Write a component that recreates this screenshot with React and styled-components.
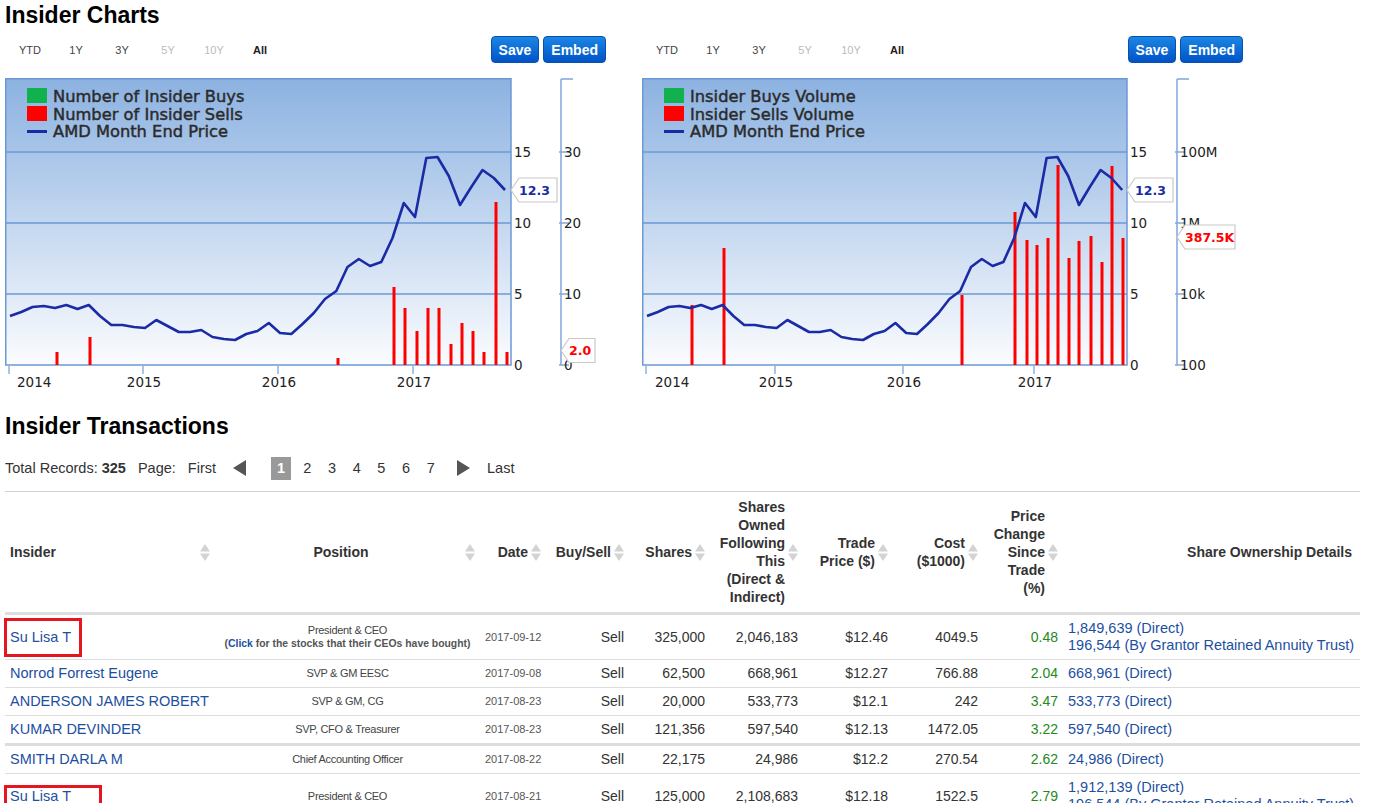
import React from 'react';
import styled, { createGlobalStyle } from 'styled-components';

const GlobalStyle = createGlobalStyle`
  html, body {
    margin: 0;
    padding: 0;
    background: #fff;
    overflow: hidden;
  }
  body {
    font-family: "Liberation Sans", Arial, sans-serif;
    color: #333;
  }
`;

// month end price, in chart pixels (Jan 2014 .. Sep 2017)
const PRICE = [241,237,232,231,233,230,234,230,241,250,250,252,253,245,251,257,257,255,262,264,265,259,256,248,258,259,249,238,224,216,192,184,191,187,163,128,142,83,82,101,130,112,95,103,115];

const GRID = [
  { y: 77, label: '15' },
  { y: 148, label: '10' },
  { y: 219, label: '5' },
  { y: 290, label: '0' },
];

const charts = [
  {
    id: 'count',
    plotW: 506,
    step: 11.25,
    legend: ['Number of Insider Buys', 'Number of Insider Sells', 'AMD Month End Price'],
    axis2: ['30', '20', '10', '0'],
    years: [
      { x: 4, lx: 12, label: '2014', start: true },
      { x: 138, label: '2015' },
      { x: 273, label: '2016' },
      { x: 408, label: '2017' },
    ],
    bars: [[52,277],[85,262],[333,283],[389,212],[400,233],[412,256],[423,233],[434,233],[446,269],[457,248],[468,256],[479,277],[491,127],[502,277]],
    tag2: { text: '2.0', cy: 275.5, w: 34 },
  },
  {
    id: 'volume',
    plotW: 485,
    step: 10.8,
    legend: ['Insider Buys Volume', 'Insider Sells Volume', 'AMD Month End Price'],
    axis2: ['100M', '1M', '10k', '100'],
    years: [
      { x: 4, lx: 13, label: '2014', start: true },
      { x: 133, label: '2015' },
      { x: 261, label: '2016' },
      { x: 392, label: '2017' },
    ],
    bars: [[50,230],[82,173],[320,220],[373,137],[385,165],[395,170],[406,163],[416,90],[427,183],[437,166],[449,161],[460,187],[470,91],[481,163]],
    tag2: { text: '387.5K', cy: 162, w: 58 },
  },
];

const ranges = [
  { label: 'YTD' },
  { label: '1Y' },
  { label: '3Y' },
  { label: '5Y', off: true },
  { label: '10Y', off: true },
  { label: 'All', active: true },
];

const columns = [
  { label: 'Insider', w: 210, align: 'left' },
  { label: 'Position', w: 265, align: 'center' },
  { label: 'Date', w: 66, align: 'right' },
  { label: 'Buy/Sell', w: 83, align: 'right' },
  { label: 'Shares', w: 81, align: 'right' },
  { label: 'Shares Owned Following This (Direct & Indirect)', w: 93, align: 'right' },
  { label: 'Trade Price ($)', w: 90, align: 'right' },
  { label: 'Cost ($1000)', w: 90, align: 'right' },
  { label: 'Price Change Since Trade (%)', w: 80, align: 'right' },
  { label: 'Share Ownership Details', w: 297, align: 'right', nosort: true },
];

const GRAT = '196,544 (By Grantor Retained Annuity Trust)';

const rows = [
  { name: 'Su Lisa T', flag: { right: 8, top: 8 }, pos: 'President & CEO', click: true, date: '2017-09-12', shares: '325,000', owned: '2,046,183', price: '$12.46', cost: '4049.5', change: '0.48', details: ['1,849,639 (Direct)', GRAT] },
  { name: 'Norrod Forrest Eugene', pos: 'SVP & GM EESC', date: '2017-09-08', shares: '62,500', owned: '668,961', price: '$12.27', cost: '766.88', change: '2.04', details: ['668,961 (Direct)'] },
  { name: 'ANDERSON JAMES ROBERT', pos: 'SVP & GM, CG', date: '2017-08-23', shares: '20,000', owned: '533,773', price: '$12.1', cost: '242', change: '3.47', details: ['533,773 (Direct)'] },
  { name: 'KUMAR DEVINDER', pos: 'SVP, CFO & Treasurer', date: '2017-08-23', shares: '121,356', owned: '597,540', price: '$12.13', cost: '1472.05', change: '3.22', details: ['597,540 (Direct)'] },
  { name: 'SMITH DARLA M', pos: 'Chief Accounting Officer', date: '2017-08-22', shares: '22,175', owned: '24,986', price: '$12.2', cost: '270.54', change: '2.62', details: ['24,986 (Direct)'], thick: true },
  { name: 'Su Lisa T', flag: { right: 28, top: 0 }, pos: 'President & CEO', date: '2017-08-21', shares: '125,000', owned: '2,108,683', price: '$12.18', cost: '1522.5', change: '2.79', details: ['1,912,139 (Direct)', GRAT] },
];

const Page = styled.div`
  width: 1355px;
  padding-left: 5px;
`;

const Title = styled.h1`
  margin: ${p => p.$top || 0}px 0 0;
  font-size: 23px;
  line-height: 30px;
  font-weight: bold;
  color: #000;
`;

const ChartsRow = styled.div`
  display: flex;
  gap: 36px;
`;

const ChartPanel = styled.div`
  width: 601px;
  display: flex;
  flex-direction: column;
`;

const Toolbar = styled.div`
  display: flex;
  align-items: center;
  justify-content: space-between;
  height: 27px;
  margin: 6px 0 12px;
`;

const Ranges = styled.div`
  display: flex;
  padding-left: 2px;
`;

const Range = styled.span`
  width: 46px;
  text-align: center;
  font-size: 11px;
  color: ${p => (p.$off ? '#bcbcbc' : p.$active ? '#222' : '#444')};
  font-weight: ${p => (p.$active ? 'bold' : 'normal')};
`;

const Buttons = styled.div`
  display: flex;
  gap: 4px;
`;

const Button = styled.button`
  height: 27px;
  padding: 0 7px;
  border: 1px solid #0b4fae;
  border-radius: 4px;
  background: linear-gradient(#1b86e4, #0053c7);
  color: #fff;
  font: bold 14px "Liberation Sans", Arial, sans-serif;
  cursor: pointer;
`;

const ChartSvg = styled.svg`
  display: block;
  font-family: "DejaVu Sans", Verdana, sans-serif;
`;

const LegendText = styled.text`
  font-family: "DejaVu Sans", Verdana, sans-serif;
  font-size: 16.3px;
  fill: #2b2b2b;
  stroke: #2b2b2b;
  stroke-width: 0.45px;
`;

const AxisText = styled.text`
  font-size: 13.5px;
  fill: #222;
`;

const TagText = styled.text`
  font-size: 12.5px;
  font-weight: bold;
  fill: ${p => p.$color};
`;

function Tag({ x, cy, w, color, children }) {
  const d = `M${x},${cy} L${x + 8},${cy - 12} L${x + w},${cy - 12} L${x + w},${cy + 12} L${x + 8},${cy + 12} Z`;
  return (
    <g>
      <path d={d} fill="#fff" stroke="#c9c9c9" strokeWidth="1.2" />
      <TagText x={x + 8} y={cy + 4.5} $color={color}>{children}</TagText>
    </g>
  );
}

function InsiderChart({ id, plotW, step, legend, axis2, years, bars, tag2 }) {
  const ax = plotW + 50;
  const points = PRICE.map((y, i) => `${(5 + i * step).toFixed(1)},${y}`).join(' ');
  return (
    <ChartSvg width="601" height="325" viewBox="0 0 601 325">
      <defs>
        <linearGradient id={`bg-${id}`} x1="0" y1="0" x2="0" y2="1">
          <stop offset="0" stopColor="#8cb2e1" />
          <stop offset="1" stopColor="#fbfcfe" />
        </linearGradient>
      </defs>
      <rect x="0.75" y="3.75" width={plotW - 0.75} height="286.25" fill={`url(#bg-${id})`} stroke="#6b99d6" strokeWidth="1.5" />
      {GRID.slice(0, 3).map(g => (
        <line key={g.y} x1="0" x2={plotW} y1={g.y} y2={g.y} stroke="#6b99d6" strokeWidth="1.5" />
      ))}
      {bars.map(([x, top]) => (
        <rect key={x} x={x - 1.5} y={top} width="3" height={290 - top} fill="#ff0000" />
      ))}
      <polyline points={points} fill="none" stroke="#1a2ba6" strokeWidth="2.6" strokeLinejoin="round" />

      <rect x="22" y="13" width="20" height="15" fill="#12b14f" />
      <rect x="22" y="31" width="20" height="15" fill="#ff0000" />
      <line x1="22" x2="42" y1="56.5" y2="56.5" stroke="#1a2ba6" strokeWidth="3" />
      {legend.map((t, i) => (
        <LegendText key={t} x="48" y={27 + i * 17.5}>{t}</LegendText>
      ))}

      {GRID.map(g => (
        <AxisText key={g.y} x={plotW + 3} y={g.y + 5}>{g.label}</AxisText>
      ))}

      <line x1={ax} x2={ax} y1="4" y2="290" stroke="#7ea6dc" strokeWidth="1.5" />
      <line x1={ax} x2={ax + 12} y1="4" y2="4" stroke="#7ea6dc" strokeWidth="1.5" />
      {GRID.map((g, i) => (
        <g key={g.y}>
          <line x1={ax - 2} x2={ax + 8} y1={g.y} y2={g.y} stroke="#7ea6dc" strokeWidth="1.5" />
          <AxisText x={ax + 3} y={g.y + 5}>{axis2[i]}</AxisText>
        </g>
      ))}

      {years.map(yr => (
        <g key={yr.label}>
          <line x1={yr.x} x2={yr.x} y1="290" y2="299" stroke="#8fb0e0" strokeWidth="1.5" />
          <AxisText x={yr.start ? yr.lx : yr.x + 1} y="312" textAnchor={yr.start ? 'start' : 'middle'}>{yr.label}</AxisText>
        </g>
      ))}

      <Tag x={plotW} cy={115} w={46} color="#1a2ba6">12.3</Tag>
      <Tag x={ax} cy={tag2.cy} w={tag2.w} color="#ff0000">{tag2.text}</Tag>
    </ChartSvg>
  );
}

const Pager = styled.div`
  display: flex;
  align-items: center;
  height: 24px;
  margin-top: 15px;
  font-size: 14.5px;
  color: #333;
`;

const PagerItem = styled.span`
  margin-left: ${p => p.$ml || 0}px;
`;

const Arrow = styled.span`
  margin-left: ${p => p.$ml}px;
  width: 0;
  height: 0;
  border-top: 8px solid transparent;
  border-bottom: 8px solid transparent;
  ${p => (p.$dir === 'left' ? 'border-right' : 'border-left')}: 13px solid #555;
`;

const CurrentPage = styled.span`
  margin-left: 25px;
  width: 20px;
  height: 23px;
  line-height: 23px;
  text-align: center;
  background: #999;
  color: #fff;
  font-weight: bold;
`;

const PageNum = styled.span`
  padding: 0 8.3px;
  margin-left: ${p => p.$ml || 0}px;
`;

const Table = styled.table`
  margin-top: 11px;
  width: 1355px;
  table-layout: fixed;
  border-collapse: collapse;
  border-top: 1px solid #d2d2d2;
`;

const Th = styled.th`
  padding: 6px ${p => (p.$nosort ? 8 : 5)}px 6px 5px;
  font-size: 14px;
  line-height: 18px;
  font-weight: bold;
  color: #333;
  vertical-align: middle;
  text-align: ${p => p.$align};
  border-bottom: 3px solid #ddd;
`;

const HeadInner = styled.div`
  display: flex;
  align-items: center;
  gap: 3px;
`;

const HeadLabel = styled.span`
  flex: 1;
  text-align: ${p => p.$align};
`;

function SortIcon() {
  return (
    <svg width="10" height="19" viewBox="0 0 10 19">
      <path d="M5 1 L10 8.5 L0 8.5 Z" fill="#d3d3d3" />
      <path d="M0 10.5 L10 10.5 L5 18 Z" fill="#d3d3d3" />
    </svg>
  );
}

const Td = styled.td`
  padding: 5px;
  font-size: ${p => (p.$small ? 11 : 14)}px;
  line-height: 17px;
  color: ${p => p.$color || '#333'};
  text-align: ${p => p.$align || 'right'};
  vertical-align: middle;
  border-top: ${p => (p.$thick ? 3 : 1)}px solid #ddd;
  white-space: nowrap;
`;

const NameLink = styled.a`
  font-size: 14.5px;
  color: #1d4f9f;
  text-decoration: none;
`;

const Flag = styled.span`
  display: inline-block;
  border: 3px solid #e5161f;
  padding: ${p => p.$top}px ${p => p.$right}px ${p => 16 - p.$top}px 3px;
  margin: ${p => -(p.$top + 3)}px ${p => -(p.$right + 3)}px ${p => -(19 - p.$top)}px -6px;
`;

const PosMain = styled.div`
  font-size: 11px;
  line-height: 13px;
  letter-spacing: -0.3px;
  color: #444;
`;

const PosClick = styled.div`
  font-size: 10.4px;
  line-height: 13px;
  font-weight: bold;
  color: #555;
  b {
    color: #1d4f9f;
  }
`;

const Detail = styled.div`
  font-size: 14.5px;
  color: #1d4f9f;
`;

function TransactionRow({ r }) {
  return (
    <tr>
      <Td $align="left" $thick={r.thick}>
        <NameLink href="#">
          {r.flag ? <Flag $top={r.flag.top} $right={r.flag.right}>{r.name}</Flag> : r.name}
        </NameLink>
      </Td>
      <Td $align="center" $thick={r.thick}>
        <PosMain>{r.pos}</PosMain>
        {r.click && (
          <PosClick>(<b>Click</b> for the stocks that their CEOs have bought)</PosClick>
        )}
      </Td>
      <Td $small $color="#555" $thick={r.thick}>{r.date}</Td>
      <Td $thick={r.thick}>Sell</Td>
      <Td $thick={r.thick}>{r.shares}</Td>
      <Td $thick={r.thick}>{r.owned}</Td>
      <Td $thick={r.thick}>{r.price}</Td>
      <Td $thick={r.thick}>{r.cost}</Td>
      <Td $thick={r.thick} $color="#23891c">{r.change}</Td>
      <Td $align="left" $thick={r.thick}>
        {r.details.map(d => <Detail key={d}>{d}</Detail>)}
      </Td>
    </tr>
  );
}

export default function App() {
  return (
    <Page>
      <GlobalStyle />
      <Title>Insider Charts</Title>
      <ChartsRow>
        {charts.map(c => (
          <ChartPanel key={c.id}>
            <Toolbar>
              <Ranges>
                {ranges.map(r => (
                  <Range key={r.label} $off={r.off} $active={r.active}>{r.label}</Range>
                ))}
              </Ranges>
              <Buttons>
                <Button>Save</Button>
                <Button>Embed</Button>
              </Buttons>
            </Toolbar>
            <InsiderChart {...c} />
          </ChartPanel>
        ))}
      </ChartsRow>

      <Title $top={11}>Insider Transactions</Title>
      <Pager>
        <PagerItem>Total Records: <b>325</b></PagerItem>
        <PagerItem $ml={12}>Page:</PagerItem>
        <PagerItem $ml={12}>First</PagerItem>
        <Arrow $dir="left" $ml={17} />
        <CurrentPage>1</CurrentPage>
        {['2', '3', '4', '5', '6', '7'].map((n, i) => (
          <PageNum key={n} $ml={i === 0 ? 4 : 0}>{n}</PageNum>
        ))}
        <Arrow $dir="right" $ml={14} />
        <PagerItem $ml={17}>Last</PagerItem>
      </Pager>

      <Table>
        <colgroup>
          {columns.map(c => <col key={c.label} style={{ width: c.w }} />)}
        </colgroup>
        <thead>
          <tr>
            {columns.map(c => (
              <Th key={c.label} $align={c.align} $nosort={c.nosort}>
                {c.nosort ? c.label : (
                  <HeadInner>
                    <HeadLabel $align={c.align}>{c.label}</HeadLabel>
                    <SortIcon />
                  </HeadInner>
                )}
              </Th>
            ))}
          </tr>
        </thead>
        <tbody>
          {rows.map((r, i) => <TransactionRow key={i} r={r} />)}
        </tbody>
      </Table>
    </Page>
  );
}
